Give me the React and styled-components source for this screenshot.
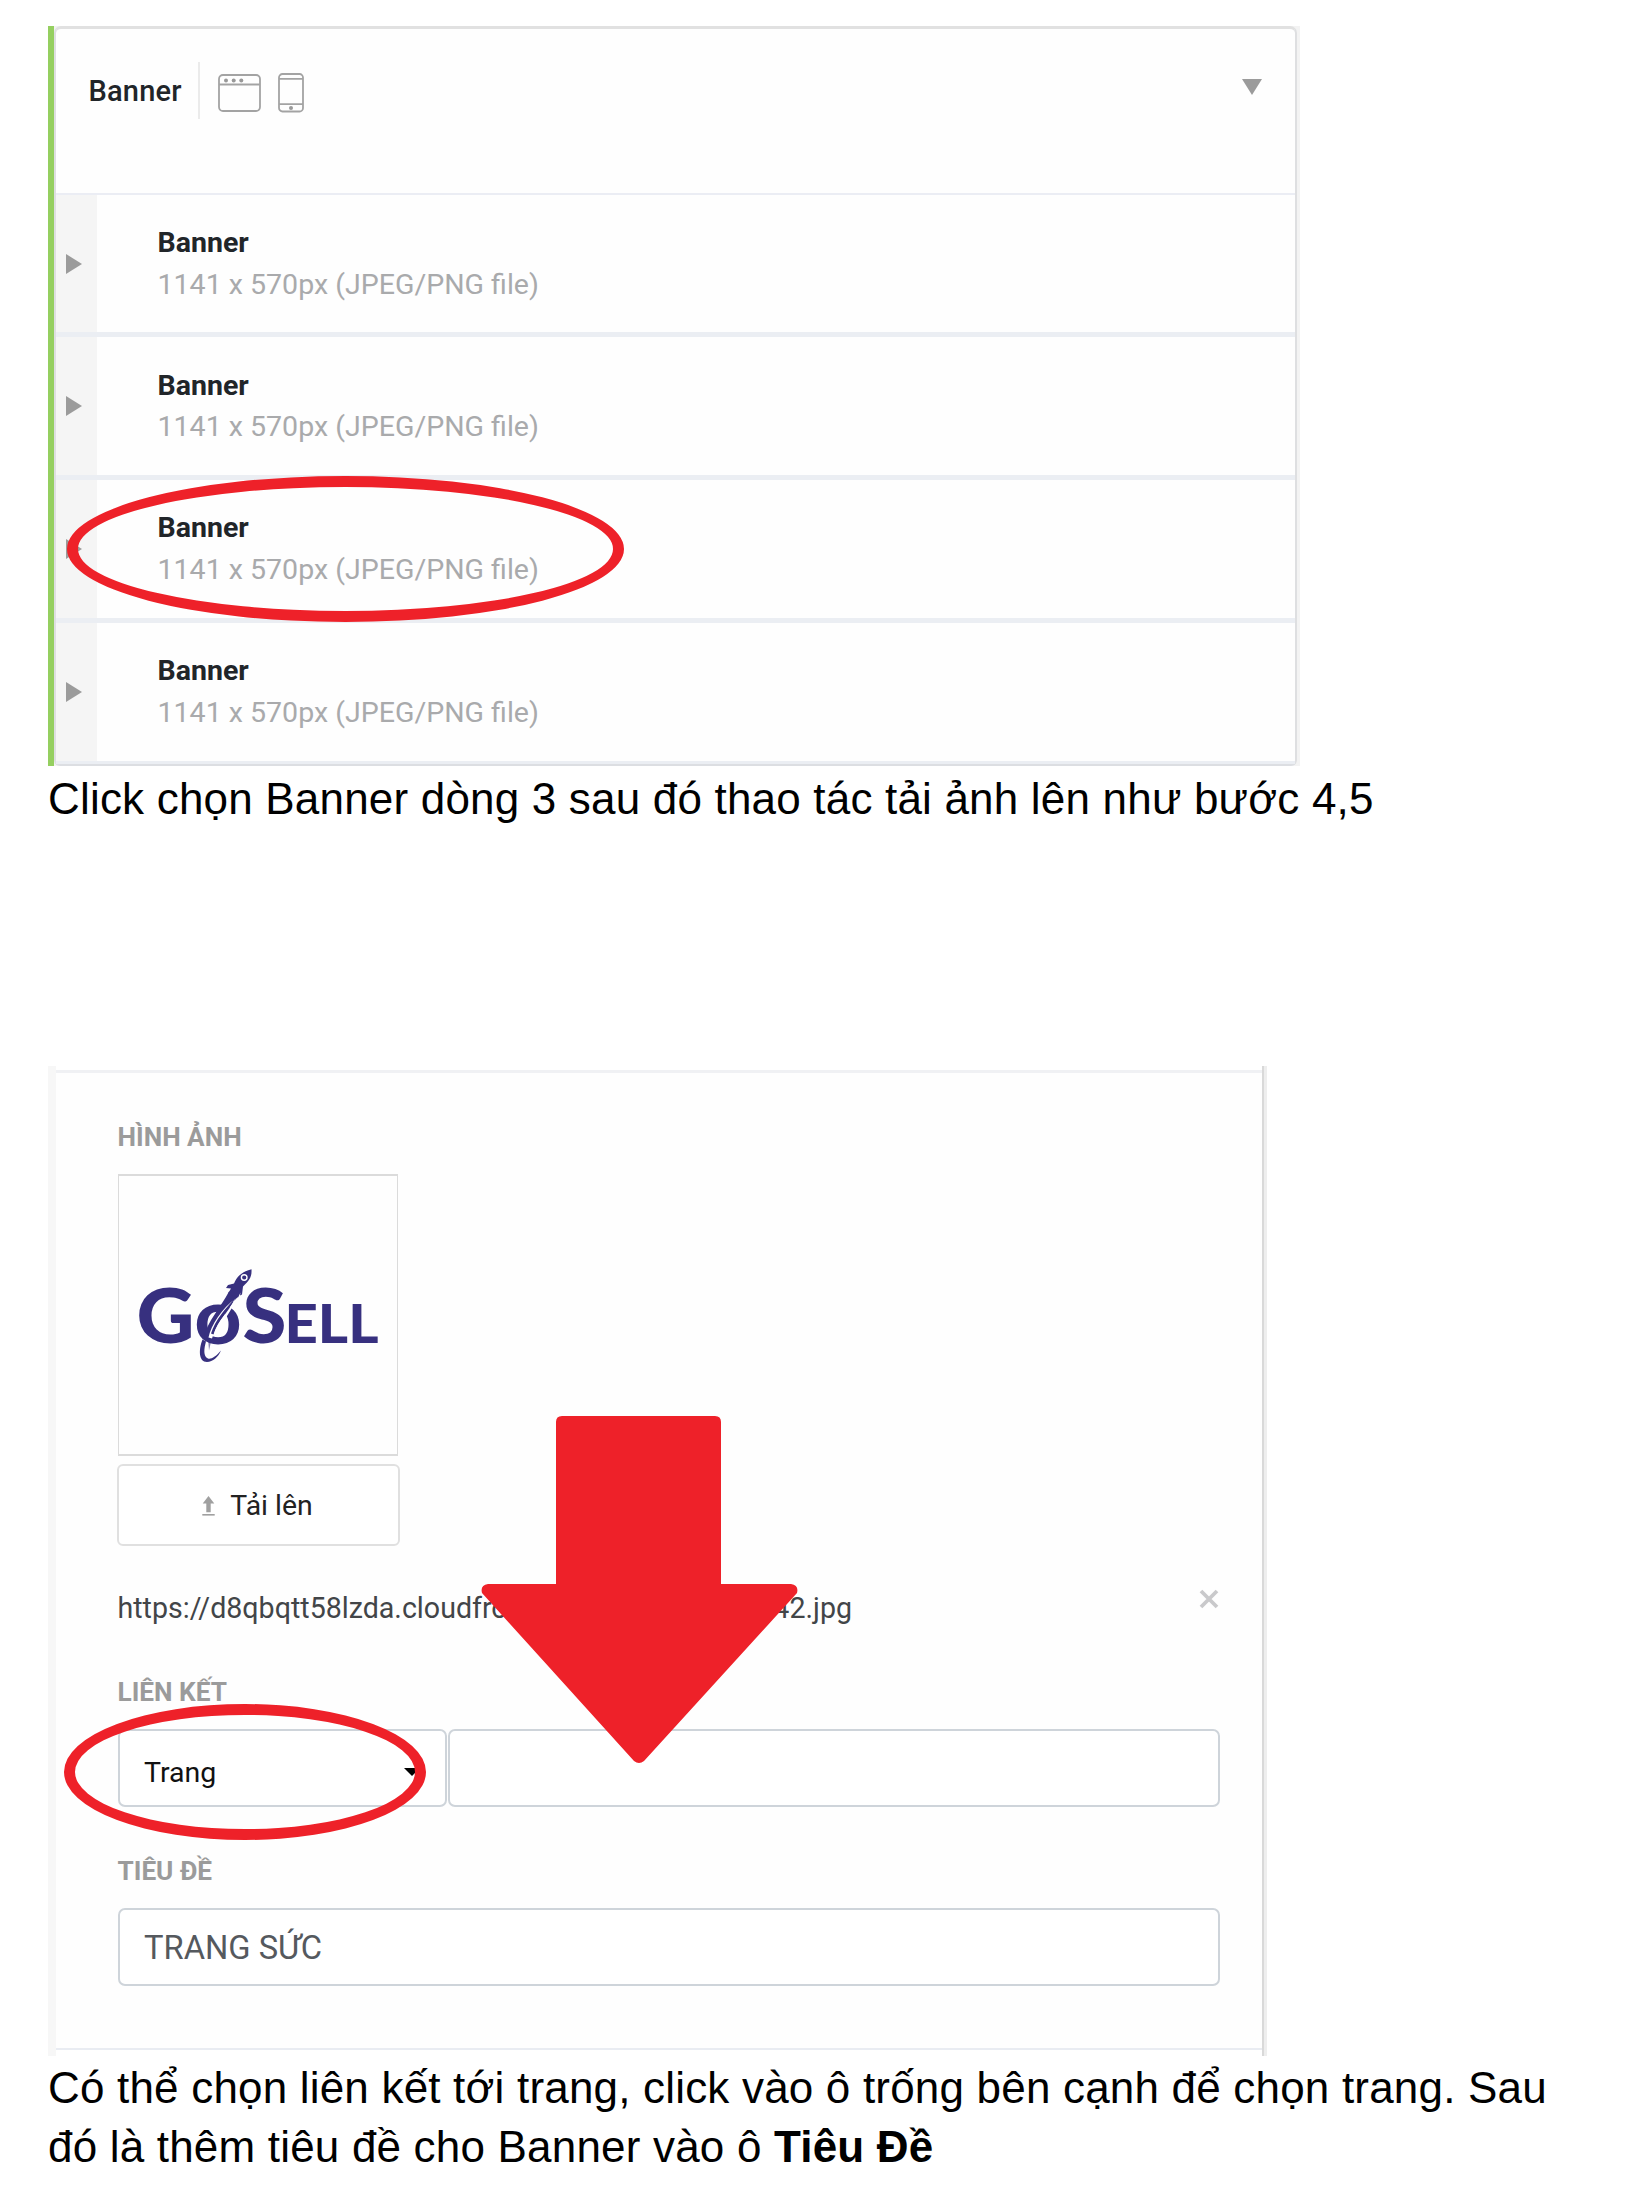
import React from "react";
import styled, { createGlobalStyle } from "styled-components";

const Global = createGlobalStyle`
  * { box-sizing: border-box; }
  body { margin: 0; background: #fff; }
`;

const RED = "#ee2129";

const Page = styled.main`
  width: 1652px;
  height: 2192px;
  overflow: hidden;
  padding: 26px 48px 0;
  font-family: Roboto, "Liberation Sans", sans-serif;
  color: #212529;
`;

const BannerPanel = styled.section`
  display: flex;
  width: 1252px;
  height: 740px;
  background: #f3f3f3;
  border-left: 6px solid #95cf60;
`;

const BannerCard = styled.div`
  width: 1243px;
  height: 740px;
  border: 2px solid #dedfe1;
  border-top: 3px solid #e1e1e1;
  border-bottom: 2px solid #dcdee2;
  border-radius: 7px 7px 6px 6px;
  background: #fefefe;
`;

const BannerHeader = styled.header`
  display: flex;
  height: 165.7px;
  padding: 33px 33px 0 32.5px;
  border-bottom: 2.6px solid #ebedf4;
`;

const HeaderTitle = styled.h2`
  margin: 0;
  width: 109.5px;
  font-size: 29px;
  font-weight: 500;
  line-height: 59px;
  letter-spacing: 0.2px;
`;

const DeviceIcons = styled.div`
  display: flex;
  gap: 17px;
  height: 57px;
  padding: 11px 0 0 17.5px;
  border-left: 2px solid #ebebeb;
`;

const Triangle = styled.span`
  width: 0;
  height: 0;
  ${({ $down }) =>
    $down
      ? `margin: 17px 0 0 auto;
         border-left: 10px solid transparent;
         border-right: 10px solid transparent;
         border-top: 16px solid #9b9b9b;`
      : `margin-left: 9.5px;
         border-top: 10px solid transparent;
         border-bottom: 10px solid transparent;
         border-left: 16px solid #9b9b9b;`}
`;

const BannerRow = styled.div`
  position: relative;
  display: flex;
  height: 142.7px;
  border-bottom: ${({ $last }) => ($last ? 3.5 : 5)}px solid #ebeef3;
  &:last-child { height: 140.8px; }
`;

const RowHandle = styled.div`
  display: flex;
  align-items: center;
  width: 41px;
  background: #f5f5f5;
`;

const RowText = styled.div`
  padding: 27.4px 0 0 60.5px;
`;

const RowTitle = styled.div`
  font-size: 28.5px;
  font-weight: 700;
  line-height: 41.5px;
  white-space: nowrap;
`;

const RowNote = styled.div`
  font-size: 28.55px;
  line-height: 41.6px;
  color: #a9aaac;
  white-space: nowrap;
`;

const Ring = styled.span`
  position: absolute;
  left: ${({ $x }) => $x}px;
  top: ${({ $y }) => $y}px;
  width: ${({ $w }) => $w}px;
  height: ${({ $h }) => $h}px;
  border: 11px solid ${RED};
  border-radius: 50%;
`;

const Caption = styled.p`
  margin: 0;
  height: ${({ $height }) => $height}px;
  padding-top: ${({ $top }) => $top}px;
  font-family: "Liberation Sans", Arial, sans-serif;
  font-size: 44px;
  line-height: 59px;
  letter-spacing: 0.19px;
  color: #000;
  white-space: nowrap;
`;

const FormPanel = styled.section`
  position: relative;
  width: 1219px;
  height: 990px;
  padding-top: 4px;
  border-left: 8px solid #f7f7f7;
  border-right: 3px solid #eee;
`;

const FormBody = styled.div`
  height: 980px;
  padding: 39px 42px 0 62px;
  border-top: 3px solid #f0f1f4;
  border-bottom: 2.5px solid #e9ecf2;
  background: #fefefe;
`;

const RightEdge = styled.span`
  position: absolute;
  top: 0;
  right: 0;
  width: 2px;
  height: 100%;
  background: #d9d9d9;
`;

const Label = styled.div`
  height: ${({ $height }) => $height}px;
  padding-top: ${({ $top }) => $top || 0}px;
  margin-left: -0.5px;
  font-size: 26.2px;
  font-weight: 700;
  line-height: 50px;
  color: #9b9b9b;
  white-space: nowrap;
`;

const Preview = styled.div`
  width: 280px;
  height: 282px;
  border: 2px solid #dbdbdb;
  border-width: 2px 1px;
`;

const UploadButton = styled.button`
  display: flex;
  align-items: center;
  justify-content: center;
  gap: 15px;
  width: 283px;
  height: 82px;
  margin: 8.5px 0 -0.5px -1.5px;
  padding: 1px 1px 0 0;
  border: 2px solid #e0e0e0;
  border-radius: 6px;
  background: #fff;
  font: 400 28.4px Roboto, sans-serif;
  color: #222;
`;

const UrlRow = styled.div`
  display: flex;
  justify-content: space-between;
  align-items: flex-start;
  height: 95px;
  padding: 34px 2px 0 0;
`;

const Url = styled.span`
  display: flex;
  justify-content: space-between;
  width: 734.5px;
  margin-left: -0.5px;
  padding-top: 8px;
  font-size: 28.6px;
  line-height: 40px;
  color: #424548;
  white-space: nowrap;
`;

const FieldRow = styled.div`
  display: flex;
  gap: 1px;
`;

const Field = styled.div`
  display: flex;
  align-items: center;
  justify-content: space-between;
  width: ${({ $width }) => $width}px;
  height: 78px;
  padding: ${({ $top }) => $top || 0}px 25px 0 24px;
  border: 2px solid #ced4da;
  border-radius: 7px;
  background: #fff;
  font-size: ${({ $size }) => $size || 28.5}px;
  color: ${({ $color }) => $color || "#111"};
`;

const Caret = styled.span`
  border-left: 8px solid transparent;
  border-right: 8px solid transparent;
  border-top: 8px solid #000;
`;

const ArrowOverlay = styled.svg`
  position: absolute;
  left: 425px;
  top: 350px;
`;

const CloseMark = styled.svg`
  margin: 9px 1px 0 0;
`;

function BrowserIcon() {
  return (
    <svg width="43" height="40" viewBox="0 0 43 40" fill="none" stroke="#a3a3a3" strokeWidth="1.8">
      <rect x="1" y="2" width="41" height="36" rx="4" />
      <path d="M1 11.5H42" />
      <g fill="#999" stroke="none">
        <circle cx="8" cy="7.5" r="2" />
        <circle cx="15.7" cy="7.5" r="2" />
        <circle cx="23.3" cy="7.5" r="2" />
      </g>
    </svg>
  );
}

function PhoneIcon() {
  return (
    <svg width="26" height="40" viewBox="0 0 26 40" fill="none" stroke="#a3a3a3" strokeWidth="1.8">
      <rect x="1" y="1" width="24" height="37.5" rx="3.5" />
      <path d="M1 5.8H25M1 31.2H25" />
      <circle cx="13" cy="35" r="2" fill="#999" stroke="none" />
    </svg>
  );
}

function UploadIcon() {
  return (
    <svg width="13" height="20" viewBox="0 0 13 20" fill="#a0a0a0">
      <path d="M6.5 0L12.3 7.5H8.7V16.3H4.3V7.5H.7Z" />
      <rect x="0.3" y="18" width="12.4" height="1.6" />
    </svg>
  );
}

function CloseIcon() {
  return (
    <CloseMark width="20" height="20" viewBox="0 0 20 20" stroke="#c9c9cb" strokeWidth="3.8">
      <path d="M2 2L18 18M18 2L2 18" />
    </CloseMark>
  );
}

function GoSellLogo() {
  return (
    <svg width="278" height="278" viewBox="119 1175.5 278 278" fill="#37307f" fontFamily="Lato, sans-serif" fontWeight="900">
      <text x="136.5" y="1342.5" fontSize="76" textLength="58" lengthAdjust="spacingAndGlyphs">G</text>
      <text x="194" y="1343" fontSize="76" fontWeight="700" textLength="48" lengthAdjust="spacingAndGlyphs">o</text>
      <text x="242.5" y="1342.5" fontSize="76" textLength="44" lengthAdjust="spacingAndGlyphs">S</text>
      <text x="284.5" y="1342.5" fontSize="53" textLength="94" lengthAdjust="spacingAndGlyphs">ELL</text>
      <path d="M229 1291L239 1295C225 1311 215 1323 209 1339L204 1336C207 1322 221 1306 229 1291Z" />
      <path d="M208.5 1337C211 1325 222 1307 236 1298C228 1309 218 1320 212 1338Z" fill="#fff" />
      <path d="M211 1333C215 1320 226 1307 235 1298C230 1310 218 1319 213.5 1334Z" />
      <path d="M213.5 1335C217 1321 229 1311 234.5 1299C232 1313 220 1322 215.5 1335Z" fill="#fff" />
      <path d="M251.5 1268.8C242 1271 237 1276 234 1283L228 1284.5L226 1287.5L231 1288L228 1293L238 1297L240.5 1292L240 1295L242 1294L243 1286C249 1280 252 1277 251.5 1268.8Z" />
      <circle cx="244.2" cy="1277" r="2.8" fill="#37307f" stroke="#fff" strokeWidth="1.4" />
      <path d="M202.5 1339C198.5 1349 198.5 1361.5 207 1361.5C213 1361 218 1357 221 1350C216 1356 211 1359 208 1358C203 1356 204 1348 206 1341Z" />
      <path d="M208.3 1341L209 1350L210.8 1342Z" opacity="0.6" />
    </svg>
  );
}

const banners = [1, 2, 3, 4];

export default function App() {
  return (
    <>
      <Global />
      <Page>
        <BannerPanel>
          <BannerCard>
            <BannerHeader>
              <HeaderTitle>Banner</HeaderTitle>
              <DeviceIcons>
                <BrowserIcon />
                <PhoneIcon />
              </DeviceIcons>
              <Triangle $down />
            </BannerHeader>
            {banners.map((n) => (
              <BannerRow key={n} $last={n === 4}>
                <RowHandle>
                  <Triangle />
                </RowHandle>
                <RowText>
                  <RowTitle>Banner</RowTitle>
                  <RowNote>1141 x 570px (JPEG/PNG file)</RowNote>
                </RowText>
                {n === 3 && <Ring $x={10.5} $y={-4} $w={557.5} $h={146} />}
              </BannerRow>
            ))}
          </BannerCard>
        </BannerPanel>
        <Caption $top={2.5} $height={300}>
          Click chọn Banner dòng 3 sau đó thao tác tải ảnh lên như bước 4,5
        </Caption>
        <FormPanel>
          <FormBody>
            <Label $height={61.5}>HÌNH ẢNH</Label>
            <Preview>
              <GoSellLogo />
            </Preview>
            <UploadButton>
              <UploadIcon />
              Tải lên
            </UploadButton>
            <UrlRow>
              <Url>
                <span>https://d8qbqtt58lzda.cloudfront.net</span>
                <span>/images/42.jpg</span>
              </Url>
              <CloseIcon />
            </UrlRow>
            <Label $top={26} $height={88.5}>LIÊN KẾT</Label>
            <FieldRow>
              <Field $width={329} $top={8.5}>
                Trang
                <Caret />
              </Field>
              <Field $width={772} />
            </FieldRow>
            <Label $top={38.5} $height={101}>TIÊU ĐỀ</Label>
            <Field $width={1102} $size={32.7} $top={1.5} $color="#55595e">TRANG SỨC</Field>
          </FormBody>
          <RightEdge />
          <Ring $x={8} $y={638} $w={362} $h={136} />
          <ArrowOverlay width="317" height="348" viewBox="481 1416 317 348" fill={RED}>
            <path d="M562 1416H715Q721 1416 721 1422V1584H791Q799 1585 797 1593L644 1761Q639 1765 634 1761L482 1593Q480 1585 488 1584H556V1422Q556 1416 562 1416Z" />
          </ArrowOverlay>
        </FormPanel>
        <Caption $top={2} $height={130}>
          Có thể chọn liên kết tới trang, click vào ô trống bên cạnh để chọn trang. Sau
          <br />
          đó là thêm tiêu đề cho Banner vào ô <b>Tiêu Đề</b>
        </Caption>
      </Page>
    </>
  );
}
